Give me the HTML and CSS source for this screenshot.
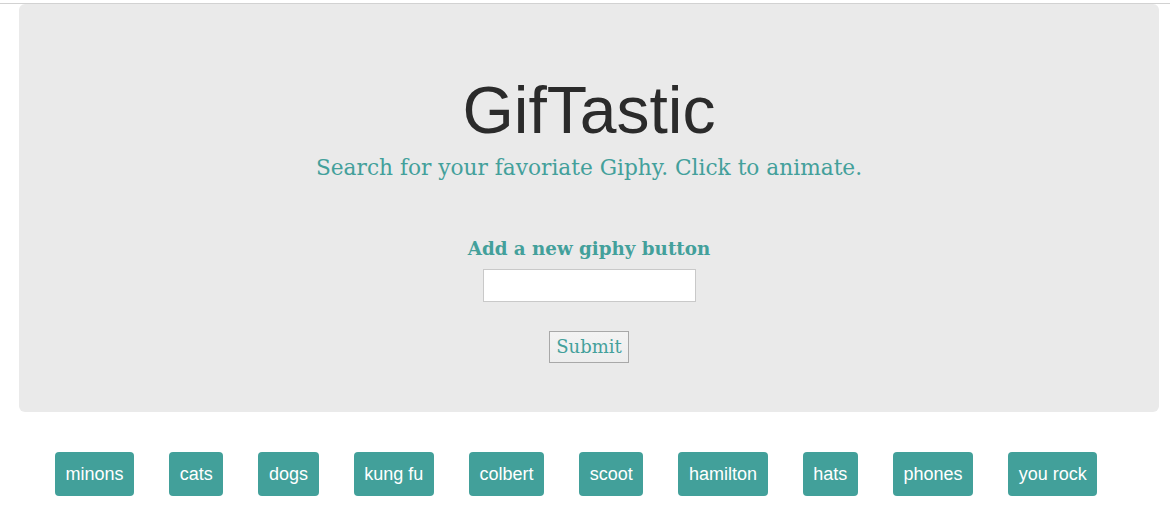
FILE: index.html
```html
<!DOCTYPE html>
<html>
<head>
<meta charset="utf-8">
<title>GifTastic</title>
<link rel="stylesheet" href="styles.css">
</head>
<body>
<div class="topline"></div>
<div class="container">
  <div class="jumbotron">
    <h1 class="title">GifTastic</h1>
    <p class="lead">Search for your favoriate Giphy. Click to animate.</p>
    <form class="add-form">
      <label class="add-label" for="giphy-input">Add a new giphy button</label>
      <input class="add-input" id="giphy-input" type="text">
      <button class="submit" type="button">Submit</button>
    </form>
  </div>
  <div class="buttons">
    <button class="gif-btn" type="button">minons</button>
    <button class="gif-btn" type="button">cats</button>
    <button class="gif-btn" type="button">dogs</button>
    <button class="gif-btn" type="button">kung fu</button>
    <button class="gif-btn" type="button">colbert</button>
    <button class="gif-btn" type="button">scoot</button>
    <button class="gif-btn" type="button">hamilton</button>
    <button class="gif-btn" type="button">hats</button>
    <button class="gif-btn" type="button">phones</button>
    <button class="gif-btn" type="button">you rock</button>
  </div>
</div>
</body>
</html>
```

FILE: styles.css
```css
html, body {
  margin: 0;
  padding: 0;
  background: #ffffff;
}

.topline {
  margin-top: 3px;
  height: 1px;
  background: #d2d2d2;
}

.container {
  width: 1140px;
  margin-left: 19px;
}

.jumbotron {
  box-sizing: border-box;
  height: 408px;
  background: #eaeaea;
  border-radius: 6px;
  padding-top: 71px;
  display: flex;
  flex-direction: column;
  align-items: center;
}

.title {
  margin: 0;
  font-family: "Liberation Sans", Arial, sans-serif;
  font-weight: 400;
  font-size: 66px;
  line-height: 70px;
  color: #2b2b2b;
}

.lead {
  margin: 10px 0 0;
  font-family: "DejaVu Serif", serif;
  font-size: 21.7px;
  line-height: 26px;
  color: #43a09b;
}

.add-form {
  margin-top: 55px;
  display: flex;
  flex-direction: column;
  align-items: center;
}

.add-label {
  font-family: "DejaVu Serif", serif;
  font-weight: 700;
  font-size: 18.3px;
  line-height: 26px;
  color: #43a09b;
}

.add-input {
  box-sizing: border-box;
  margin-top: 7px;
  width: 213px;
  height: 33px;
  border: 1px solid #c9c9c9;
  background: #ffffff;
  padding: 0 6px;
  outline: none;
}

.submit {
  box-sizing: border-box;
  margin-top: 29px;
  height: 32px;
  padding: 0 6px;
  border: 1px solid #a8a8a8;
  border-radius: 0;
  background: linear-gradient(#f3f3f3, #ededed);
  font-family: "DejaVu Serif", serif;
  font-size: 18px;
  line-height: 28px;
  color: #43a09b;
}

.buttons {
  display: flex;
  gap: 35px;
  margin-top: 40px;
  padding-left: 36px;
}

.gif-btn {
  box-sizing: border-box;
  height: 44px;
  padding: 0 10.6px;
  border: none;
  border-radius: 4px;
  background: #42a09a;
  color: #ffffff;
  font-family: "Liberation Sans", Arial, sans-serif;
  font-size: 18px;
  line-height: 44px;
}
```
